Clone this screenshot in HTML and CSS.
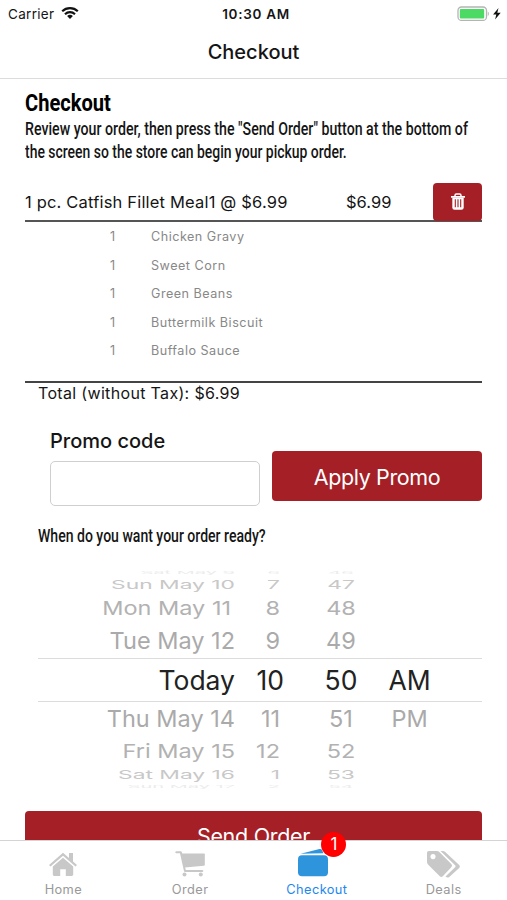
FILE: index.html
```
<!DOCTYPE html>
<html lang="en">
<head>
    <meta charset="UTF-8">
    <meta name="viewport" content="width=device-width, initial-scale=1.0">
    <title>Checkout</title>
    <link rel="stylesheet" href="styles.css">
</head>
<body>
    <div class="app">
        <!-- Status bar -->
        <div class="status-bar">
            <div class="carrier">
                <span>Carrier</span>
                <svg class="wifi" width="18" height="14" viewBox="0 0 18 14" fill="none" stroke="#111" stroke-width="2.2">
                    <path d="M1.2 5.2a11.4 11.4 0 0 1 15.6 0"/>
                    <path d="M4 8.2a7.3 7.3 0 0 1 10 0"/>
                    <path d="M9 13 6.1 10.1a4.2 4.2 0 0 1 5.8 0z" fill="#111" stroke="none"/>
                </svg>
            </div>
            <div class="time">10:30 AM</div>
            <div class="battery">
                <svg width="45" height="16" viewBox="0 0 45 16">
                    <rect x="1" y="1" width="28.5" height="13.4" rx="3.5" fill="#fff" stroke="#b4b4b4" stroke-width="1.3"/>
                    <rect x="2.8" y="3" width="24.4" height="9.5" rx="1" fill="#4cd964"/>
                    <path d="M30.8 5.5c1.3.6 1.3 3.9 0 4.6z" fill="#aaa"/>
                    <path d="m41.5 2-5.4 6.5h3.2l-1.2 5.1 5.6-6.8h-3.4z" fill="#111"/>
                </svg>
            </div>
        </div>

        <!-- Nav bar -->
        <div class="nav-bar"><span>Checkout</span></div>

        <!-- Main Content -->
        <div class="content">
            <h1><span class="narrow title">Checkout</span></h1>
            <p class="intro">
                <span class="narrow line-one">Review your order, then press the "Send Order" button at the bottom of</span>
                <span class="narrow line-two">the screen so the store can begin your pickup order.</span>
            </p>

            <div class="order-item">
                <span class="item-name">1 pc. Catfish Fillet Meal1 @ $6.99</span>
                <span class="item-price">$6.99</span>
                <button class="delete-button">
                    <svg width="16" height="18" viewBox="0 0 16 18">
                        <path d="M5 3.2V2.4Q5 1 6.4 1h3.2Q11 1 11 2.4v.8" fill="none" stroke="#fff" stroke-width="1.5"/>
                        <path d="M1 3h14v1.7H1z" fill="#fff"/>
                        <path d="M2.3 4.5h11.4v10q0 2.3-2.3 2.3H4.6q-2.3 0-2.3-2.3z" fill="#fff"/>
                        <path d="M5.3 6.3v8M8 6.3v8M10.7 6.3v8" stroke="#a51f27" stroke-width="1.1"/>
                    </svg>
                </button>
            </div>

            <div class="sides">
                <div class="side"><span>1</span><span>Chicken Gravy</span></div>
                <div class="side"><span>1</span><span>Sweet Corn</span></div>
                <div class="side"><span>1</span><span>Green Beans</span></div>
                <div class="side"><span>1</span><span>Buttermilk Biscuit</span></div>
                <div class="side"><span>1</span><span>Buffalo Sauce</span></div>
            </div>

            <div class="total"><span>Total (without Tax): $6.99</span></div>

            <div class="promo">
                <div class="promo-field">
                    <label for="promo">Promo code</label>
                    <input id="promo" type="text">
                </div>
                <button class="promo-button"><span>Apply Promo</span></button>
            </div>

            <p class="question"><span class="narrow">When do you want your order ready?</span></p>

            <!-- Date wheel -->
            <div class="picker">
                <div class="row edge-top"><span>Sat May 9</span><span>6</span><span>46</span><span></span></div>
                <div class="row far-top"><span>Sun May 10</span><span>7</span><span>47</span><span></span></div>
                <div class="row mid-top"><span>Mon May 11</span><span>8</span><span>48</span><span></span></div>
                <div class="row near-top"><span>Tue May 12</span><span>9</span><span>49</span><span></span></div>
                <div class="row selected"><span>Today</span><span>10</span><span>50</span><span>AM</span></div>
                <div class="row near-bottom"><span>Thu May 14</span><span>11</span><span>51</span><span>PM</span></div>
                <div class="row mid-bottom"><span>Fri May 15</span><span>12</span><span>52</span><span></span></div>
                <div class="row far-bottom"><span>Sat May 16</span><span>1</span><span>53</span><span></span></div>
                <div class="row edge-bottom"><span>Sun May 17</span><span>2</span><span>54</span><span></span></div>
            </div>

            <button class="send-button"><span>Send Order</span></button>
        </div>

        <!-- Tab bar -->
        <div class="tab-bar">
            <div class="tab">
                <svg width="30" height="26" viewBox="0 0 30 26" fill="#c8c8c8">
                    <path d="M15 .7 1 12.9l1.5 1.7L15 3.8l12.5 10.8 1.5-1.7-4-3.5V1h-4v4.9z"/>
                    <path d="M15 5.8 4.8 14.6v8q0 1.4 1.4 1.4h6v-6.8h5.6V24h6q1.4 0 1.4-1.4v-8z"/>
                </svg>
                <span>Home</span>
            </div>
            <div class="tab">
                <svg width="32" height="28" viewBox="0 0 32 28" fill="#c8c8c8">
                    <path d="M7.5 3.5h22.7q.6 0 .6.8v10.4q0 1-.9 1.1L10.6 17.4z"/>
                    <path d="M2.3 2.2h4.5l4.2 18.9h17.3" fill="none" stroke="#c8c8c8" stroke-width="2" stroke-linecap="round" stroke-linejoin="round"/>
                    <circle cx="10.5" cy="24.6" r="2"/>
                    <circle cx="26.8" cy="24.6" r="2"/>
                </svg>
                <span>Order</span>
            </div>
            <div class="tab active">
                <div class="wallet">
                    <svg width="32" height="30" viewBox="0 0 32 30" fill="#2e95dc">
                        <path d="M3.6 5.7 22.5 1q1.8-.4 2.5 1l1.5 3.3z"/>
                        <rect x="1" y="7.2" width="30" height="21" rx="4"/>
                    </svg>
                    <span class="badge">1</span>
                </div>
                <span>Checkout</span>
            </div>
            <div class="tab">
                <svg width="35" height="28" viewBox="0 0 35 28" fill="#c8c8c8">
                    <path fill-rule="evenodd" d="M2.8 1h8q1.5 0 2.5 1l12 12q1.6 1.6 0 3.2l-8.5 9q-1.5 1.5-3 0L2 14.5Q1 13.4 1 12V2.8Q1 1 2.8 1zM7 4a2.6 2.6 0 1 0 .01 0z"/>
                    <path d="M14.5 1h2.2q1.5 0 2.5 1l14 13q1.3 1.4 0 2.9L23 27.2q-1.8 1-3.5-.7l9.6-9.3q1-1 0-2z"/>
                </svg>
                <span>Deals</span>
            </div>
        </div>
    </div>
</body>
</html>
```

FILE: styles.css
```
/* Body and general settings */
* {
    box-sizing: border-box;
}

body {
    margin: 0;
    background-color: #fff;
    font-family: Inter, "Liberation Sans", sans-serif;
    color: #151515;
}

button {
    border: none;
    background-color: #a51f27;
    color: #fff;
    font-family: inherit;
    border-radius: 4px;
    padding: 0;
}

.app {
    width: 507px;
    height: 900px;
    display: flex;
    flex-direction: column;
    overflow: hidden;
}

/* Status bar */
.status-bar {
    display: grid;
    grid-template-columns: 1fr auto 1fr;
    align-items: center;
    height: 27px;
    padding: 0 5px 0 8px;
    flex-shrink: 0;
}

.carrier {
    display: flex;
    align-items: center;
    gap: 7px;
    font-size: 13.5px;
    letter-spacing: 0.3px;
}

.wifi {
    margin-top: -2px;
}

.time {
    font-size: 13.5px;
    font-weight: 600;
    letter-spacing: 0.7px;
    padding-left: 2px;
}

.battery {
    display: flex;
    justify-content: flex-end;
}

/* Nav bar */
.nav-bar {
    height: 52px;
    flex-shrink: 0;
    border-bottom: 1px solid #dcdcdc;
    text-align: center;
    font-size: 20px;
    font-weight: 500;
    line-height: 50px;
}

/* Main content */
.content {
    flex: 1;
    min-height: 0;
    overflow: hidden;
    padding: 9px 25px 0;
}

.narrow {
    display: block;
    width: max-content;
    font-family: Roboto, "Liberation Sans", sans-serif;
    transform: scaleX(0.78);
    transform-origin: left center;
    white-space: nowrap;
}

h1 {
    margin: 0;
    font-size: 24.5px;
    line-height: 30px;
    color: #000;
}

.title {
    transform: scaleX(0.82);
}

.intro {
    margin: 0;
    font-size: 18.5px;
    font-weight: 500;
    line-height: 23px;
}

.line-one {
    transform: scaleX(0.766);
}

.line-two {
    transform: scaleX(0.754);
}

/* Order line */
.order-item {
    display: flex;
    align-items: center;
    height: 39px;
    margin-top: 19px;
    border-bottom: 2px solid #555;
    font-size: 16.5px;
}

.item-name {
    width: 321px;
    letter-spacing: 0.18px;
}

.item-price {
    flex: 1;
}

.delete-button {
    width: 49px;
    height: 38px;
    margin-bottom: -1px;
    display: flex;
    align-items: center;
    justify-content: center;
}

.sides {
    height: 161px;
    border-bottom: 2px solid #444;
    font-size: 12.6px;
    letter-spacing: 0.5px;
    color: #888;
}

.side {
    display: grid;
    grid-template-columns: 41px auto;
    padding-left: 85px;
    height: 28.5px;
    line-height: 30px;
}

.total {
    padding-left: 13px;
    font-size: 16px;
    line-height: 21px;
    letter-spacing: 0.33px;
}

/* Promo code */
.promo {
    display: flex;
    gap: 12px;
    padding: 25px 0 0 25px;
}

.promo-field {
    width: 210px;
}

.promo-field label {
    display: block;
    font-size: 20px;
    font-weight: 500;
    line-height: 24px;
}

.promo-field input {
    display: block;
    width: 210px;
    height: 45px;
    margin-top: 8px;
    border: 1.5px solid #cfcfcf;
    border-radius: 5px;
}

.promo-button {
    flex: 1;
    height: 50px;
    margin-top: 22px;
    padding-top: 2px;
    font-size: 21.5px;
    letter-spacing: -0.4px;
}

.question {
    margin: 18px 0 0 13px;
    font-size: 18px;
    font-weight: 500;
    line-height: 24px;
}

/* Date wheel */
.picker {
    margin: 21px 0 0 13px;
}

.row {
    display: grid;
    grid-template-columns: 197px 45px 82px 95px;
    align-items: center;
    align-content: center;
    height: 34px;
    font-size: 23.5px;
    line-height: 28px;
    color: #aaa;
}

.row span {
    text-align: center;
    white-space: nowrap;
}

.row span:nth-child(1),
.row span:nth-child(2) {
    text-align: right;
    transform-origin: right center;
}

.row span:nth-child(3) {
    padding-left: 40px;
}

.selected {
    height: 44px;
    font-size: 26.5px;
    color: #222;
    border-top: 1px solid #dcdcdc;
    border-bottom: 1px solid #dcdcdc;
}

.selected span:nth-child(2) {
    margin-right: -4px;
}

.near-top {
    height: 35px;
}

.mid-top,
.mid-bottom {
    height: 30px;
    color: #b2b2b2;
}

.mid-top span,
.mid-bottom span {
    transform: scaleY(0.82);
}

.mid-top span:first-child {
    padding-right: 4px;
}

.far-top,
.far-bottom {
    height: 17px;
    font-size: 22.8px;
    color: #c8c8c8;
}

.far-top span,
.far-bottom span {
    transform: scaleY(0.54);
}

.edge-top,
.edge-bottom {
    height: 7px;
    font-size: 20px;
    color: #ececec;
}

.edge-top span,
.edge-bottom span {
    transform: scaleY(0.2);
}

.send-button {
    display: block;
    width: 100%;
    height: 50px;
    margin-top: 21px;
    font-size: 21.5px;
    letter-spacing: -0.3px;
}

/* Tab bar */
.tab-bar {
    position: relative;
    display: grid;
    grid-template-columns: repeat(4, 1fr);
    height: 60px;
    flex-shrink: 0;
    border-top: 1px solid #d4d4d4;
    background-color: #fff;
}

.tab {
    display: flex;
    flex-direction: column;
    align-items: center;
    justify-content: flex-end;
    gap: 4px;
    padding-bottom: 2px;
    font-size: 12.8px;
    line-height: 16px;
    letter-spacing: 0.4px;
    color: #999;
}

.active {
    color: #1e88f0;
}

.wallet {
    position: relative;
    height: 30px;
    margin-right: 7px;
}

/* Sits over the wallet and the bar's top edge */
.badge {
    position: absolute;
    left: 24px;
    top: -16px;
    width: 25px;
    height: 25px;
    border-radius: 50%;
    background-color: #f00;
    color: #fff;
    font-size: 17px;
    line-height: 25px;
    text-align: center;
    letter-spacing: 0;
}
```
